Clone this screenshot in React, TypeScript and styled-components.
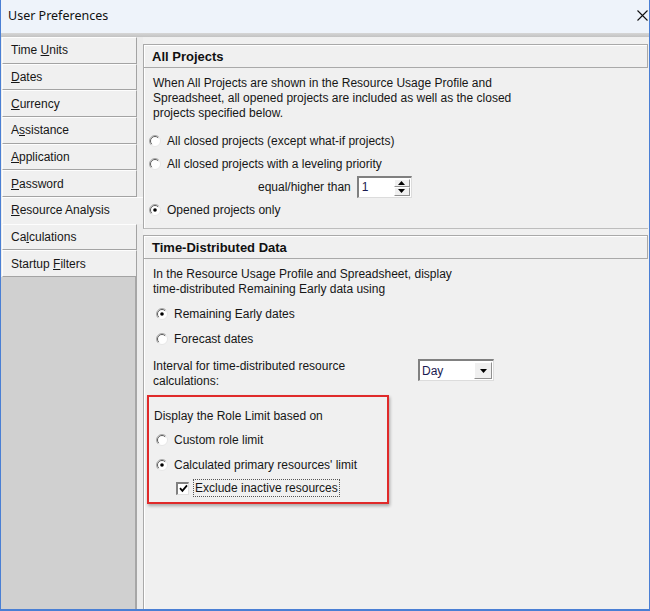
import React from 'react';
import styled, { createGlobalStyle } from 'styled-components';

const GlobalStyle = createGlobalStyle`
  html, body {
    margin: 0;
    padding: 0;
    background: #f0f0f0;
  }
  body {
    font-family: 'Liberation Sans', Arial, sans-serif;
    font-size: 12px;
    color: #161616;
  }
`;

interface TabItem {
  pre: string;
  key: string;
  post: string;
  selected?: boolean;
}

const tabs: TabItem[] = [
  { pre: 'Time ', key: 'U', post: 'nits' },
  { pre: '', key: 'D', post: 'ates' },
  { pre: '', key: 'C', post: 'urrency' },
  { pre: 'A', key: 's', post: 'sistance' },
  { pre: '', key: 'A', post: 'pplication' },
  { pre: '', key: 'P', post: 'assword' },
  { pre: '', key: 'R', post: 'esource Analysis', selected: true },
  { pre: 'Ca', key: 'l', post: 'culations' },
  { pre: 'Startup ', key: 'F', post: 'ilters' },
];

const Radio = ({ checked }: { checked?: boolean }) => (
  <RadioIcon width="12" height="12" viewBox="0 0 12 12">
    <circle cx="6" cy="6" r="5.5" fill="#fff" />
    <path d="M2.1 9.9 A5.5 5.5 0 0 1 9.9 2.1" stroke="#a8a8a8" fill="none" />
    <path d="M2.8 9.2 A4.5 4.5 0 0 1 9.2 2.8" stroke="#5c5c5c" fill="none" />
    <path d="M9.9 2.1 A5.5 5.5 0 0 1 2.1 9.9" stroke="#e6e6e6" fill="none" />
    {checked && <circle cx="6" cy="6" r="1.8" fill="#000" />}
  </RadioIcon>
);

const App = () => {
  return (
    <>
      <GlobalStyle />
      <Window>
        <TitleBar>
          <TitleText>User Preferences</TitleText>
          <CloseIcon width="11" height="11" viewBox="0 0 11 11">
            <path d="M0.5 0.5 L10.5 10.5 M10.5 0.5 L0.5 10.5" stroke="#111" strokeWidth="1.1" />
          </CloseIcon>
        </TitleBar>
        <TitleBand />
        <Body>
          <Sidebar>
            <TabList>
              {tabs.map((t) => (
                <Tab key={t.pre + t.key + t.post} $selected={t.selected}>
                  <span>
                    {t.pre}
                    <u>{t.key}</u>
                    {t.post}
                  </span>
                </Tab>
              ))}
            </TabList>
            <SidebarFiller />
          </Sidebar>

          <Content>
            <Section>
              <SectionHeader>All Projects</SectionHeader>
              <SectionBody $padBottom={7}>
                <Paragraph $gap={8}>
                  When All Projects are shown in the Resource Usage Profile and
                  <br />
                  Spreadsheet, all opened projects are included as well as the closed
                  <br />
                  projects specified below.
                </Paragraph>
                <OptionRow $indent={5} $height={23}>
                  <Radio />
                  <OptionLabel>All closed projects (except what-if projects)</OptionLabel>
                </OptionRow>
                <OptionRow $indent={5} $height={23}>
                  <Radio />
                  <OptionLabel>All closed projects with a leveling priority</OptionLabel>
                </OptionRow>
                <SpinRow>
                  <span>equal/higher than</span>
                  <SpinBox>
                    <SpinValue>1</SpinValue>
                    <SpinButtons>
                      <SpinButton>
                        <svg width="7" height="4" viewBox="0 0 7 4">
                          <path d="M0 4 L3.5 0 L7 4 Z" fill="#000" />
                        </svg>
                      </SpinButton>
                      <SpinButton>
                        <svg width="7" height="4" viewBox="0 0 7 4">
                          <path d="M0 0 L3.5 4 L7 0 Z" fill="#000" />
                        </svg>
                      </SpinButton>
                    </SpinButtons>
                  </SpinBox>
                </SpinRow>
                <OptionRow $indent={5} $height={23}>
                  <Radio checked />
                  <OptionLabel>Opened projects only</OptionLabel>
                </OptionRow>
              </SectionBody>
            </Section>

            <Section $grow>
              <SectionHeader>Time-Distributed Data</SectionHeader>
              <SectionBody $padBottom={0} $grow>
                <Paragraph $gap={4}>
                  In the Resource Usage Profile and Spreadsheet, display
                  <br />
                  time-distributed Remaining Early data using
                </Paragraph>
                <OptionRow $indent={12} $height={25}>
                  <Radio checked />
                  <OptionLabel>Remaining Early dates</OptionLabel>
                </OptionRow>
                <OptionRow $indent={12} $height={25}>
                  <Radio />
                  <OptionLabel>Forecast dates</OptionLabel>
                </OptionRow>
                <IntervalRow>
                  <IntervalLabel>
                    Interval for time-distributed resource
                    <br />
                    calculations:
                  </IntervalLabel>
                  <Dropdown>
                    <DropdownValue>Day</DropdownValue>
                    <DropdownButton>
                      <svg width="7" height="4" viewBox="0 0 7 4">
                        <path d="M0 0 L3.5 4 L7 0 Z" fill="#000" />
                      </svg>
                    </DropdownButton>
                  </Dropdown>
                </IntervalRow>

                <Highlight>
                  <HighlightTitle>Display the Role Limit based on</HighlightTitle>
                  <OptionRow $indent={2} $height={25}>
                    <Radio />
                    <OptionLabel>Custom role limit</OptionLabel>
                  </OptionRow>
                  <OptionRow $indent={2} $height={25}>
                    <Radio checked />
                    <OptionLabel>Calculated primary resources' limit</OptionLabel>
                  </OptionRow>
                  <OptionRow $indent={22} $height={22}>
                    <CheckBox>
                      <svg width="9" height="9" viewBox="0 0 9 9">
                        <path d="M1 4.2 L3.4 6.8 L8 1.4" stroke="#000" strokeWidth="1.8" fill="none" />
                      </svg>
                    </CheckBox>
                    <FocusLabel>Exclude inactive resources</FocusLabel>
                  </OptionRow>
                </Highlight>
              </SectionBody>
            </Section>
          </Content>
        </Body>
      </Window>
    </>
  );
};

const Window = styled.div`
  width: 650px;
  height: 611px;
  box-sizing: border-box;
  border-left: 1px solid #4a7fd4;
  border-right: 1px solid #4a7fd4;
  border-bottom: 2px solid #4a7fd4;
  display: flex;
  flex-direction: column;
  background: #f0f0f0;
  overflow: hidden;
`;

const TitleBar = styled.div`
  height: 33px;
  flex-shrink: 0;
  background: #eef3fa;
  display: flex;
  align-items: center;
  justify-content: space-between;
  padding: 0 0 2px 7px;
  box-sizing: border-box;
`;

const TitleText = styled.span`
  font-family: 'Noto Sans', 'Open Sans', sans-serif;
  font-size: 12.5px;
  color: #111;
`;

const CloseIcon = styled.svg`
  margin-right: 1px;
`;

const TitleBand = styled.div`
  height: 4px;
  flex-shrink: 0;
  background: linear-gradient(#d6d6d6, #c2c2c2);
`;

const Body = styled.div`
  flex: 1;
  display: flex;
  min-height: 0;
`;

const Sidebar = styled.div`
  width: 142px;
  flex-shrink: 0;
  display: flex;
  flex-direction: column;
  background: #ececec;
`;

const TabList = styled.div`
  display: flex;
  flex-direction: column;
  padding: 0 0 0 1px;
`;

const Tab = styled.div<{ $selected?: boolean }>`
  height: 26.67px;
  box-sizing: border-box;
  width: ${({ $selected }) => ($selected ? '141px' : '135px')};
  display: flex;
  align-items: center;
  padding-left: 8px;
  background: #f0f0f0;
  border-top: 1px solid #fdfdfd;
  border-left: 1px solid #fdfdfd;
  border-bottom: ${({ $selected }) => ($selected ? '1px solid #f0f0f0' : '1px solid #a3a3a3')};
  border-right: ${({ $selected }) => ($selected ? 'none' : '1px solid #a3a3a3')};
  white-space: pre;

  u {
    text-underline-offset: 1px;
  }
`;

const SidebarFiller = styled.div`
  flex: 1;
  width: 136px;
  box-sizing: border-box;
  background: #d0d0d0;
  border-right: 2px solid #a6a6a6;
`;

const Content = styled.div`
  flex: 1;
  display: flex;
  flex-direction: column;
  gap: 6px;
  padding: 7px 1px 0 0;
  min-width: 0;
`;

const Section = styled.div<{ $grow?: boolean }>`
  display: flex;
  flex-direction: column;
  flex: ${({ $grow }) => ($grow ? 1 : 'none')};
`;

const SectionHeader = styled.div`
  height: 24px;
  box-sizing: border-box;
  border: 1px solid #a9a9a9;
  box-shadow: inset 1px 1px 0 #ffffff;
  background: #f0f0f0;
  display: flex;
  align-items: center;
  padding-left: 8px;
  font-size: 13px;
  font-weight: bold;
  color: #101010;
`;

const SectionBody = styled.div<{ $padBottom: number; $grow?: boolean }>`
  flex: ${({ $grow }) => ($grow ? 1 : 'none')};
  border-left: 1px solid #a9a9a9;
  border-bottom: ${({ $grow }) => ($grow ? 'none' : '1px solid #bdbdbd')};
  box-shadow: inset 1px 0 0 #ffffff;
  padding: 8px 0 ${({ $padBottom }) => $padBottom}px 0;
  display: flex;
  flex-direction: column;
`;

const Paragraph = styled.p<{ $gap: number }>`
  margin: 0 0 ${({ $gap }) => $gap}px;
  padding-left: 9px;
  line-height: 15px;
`;

const OptionRow = styled.div<{ $indent: number; $height: number }>`
  height: ${({ $height }) => $height}px;
  display: flex;
  align-items: center;
  padding-left: ${({ $indent }) => $indent}px;
`;

const RadioIcon = styled.svg`
  flex-shrink: 0;
`;

const OptionLabel = styled.span`
  margin-left: 6px;
  white-space: nowrap;
`;

const SpinRow = styled.div`
  height: 23px;
  display: flex;
  align-items: center;
  gap: 6px;
  padding-left: 114px;
`;

const SpinBox = styled.div`
  width: 55px;
  height: 22px;
  box-sizing: border-box;
  background: #fff;
  border-top: 2px solid #808080;
  border-left: 2px solid #808080;
  border-right: 1px solid #dcdcdc;
  border-bottom: 1px solid #dcdcdc;
  display: flex;
  align-items: stretch;
`;

const SpinValue = styled.span`
  flex: 1;
  padding-left: 3px;
  display: flex;
  align-items: center;
  color: #1a1a50;
`;

const SpinButtons = styled.div`
  width: 16px;
  display: flex;
  flex-direction: column;
  margin: 1px 1px 1px 0;
`;

const SpinButton = styled.div`
  flex: 1;
  display: flex;
  align-items: center;
  justify-content: center;
  background: #f0f0f0;
  border-top: 1px solid #fff;
  border-left: 1px solid #fff;
  border-right: 1px solid #909090;
  border-bottom: 1px solid #909090;
`;

const IntervalRow = styled.div`
  display: flex;
  align-items: flex-start;
  padding: 8px 0 0 9px;
`;

const IntervalLabel = styled.div`
  width: 265px;
  line-height: 15px;
`;

const Dropdown = styled.div`
  width: 76px;
  height: 22px;
  box-sizing: border-box;
  background: #fff;
  border-top: 2px solid #808080;
  border-left: 2px solid #808080;
  border-right: 1px solid #dcdcdc;
  border-bottom: 1px solid #dcdcdc;
  display: flex;
  align-items: stretch;
`;

const DropdownValue = styled.span`
  flex: 1;
  padding-left: 2px;
  display: flex;
  align-items: center;
  color: #1a1a50;
`;

const DropdownButton = styled.div`
  width: 16px;
  margin: 1px 1px 1px 0;
  display: flex;
  align-items: center;
  justify-content: center;
  background: #f0f0f0;
  border-top: 1px solid #fff;
  border-left: 1px solid #fff;
  border-right: 1px solid #909090;
  border-bottom: 1px solid #909090;
`;

const Highlight = styled.div`
  margin: 6px 0 0 3px;
  width: 242px;
  height: 109px;
  box-sizing: border-box;
  border: 2px solid #e02a2a;
  box-shadow: 1px 2px 3px rgba(0, 0, 0, 0.3);
  padding: 12px 0 0 5px;
  display: flex;
  flex-direction: column;
`;

const HighlightTitle = styled.div`
  line-height: 15px;
  margin-bottom: 3px;
`;

const CheckBox = styled.div`
  width: 13px;
  height: 13px;
  box-sizing: border-box;
  flex-shrink: 0;
  background: #fff;
  border-top: 2px solid #808080;
  border-left: 2px solid #808080;
  border-right: 1px solid #e0e0e0;
  border-bottom: 1px solid #e0e0e0;
  display: flex;
  align-items: center;
  justify-content: center;
`;

const FocusLabel = styled.span`
  margin-left: 4px;
  padding: 1px 1px;
  border: 1px dotted #555;
  white-space: nowrap;
`;

export default App;
